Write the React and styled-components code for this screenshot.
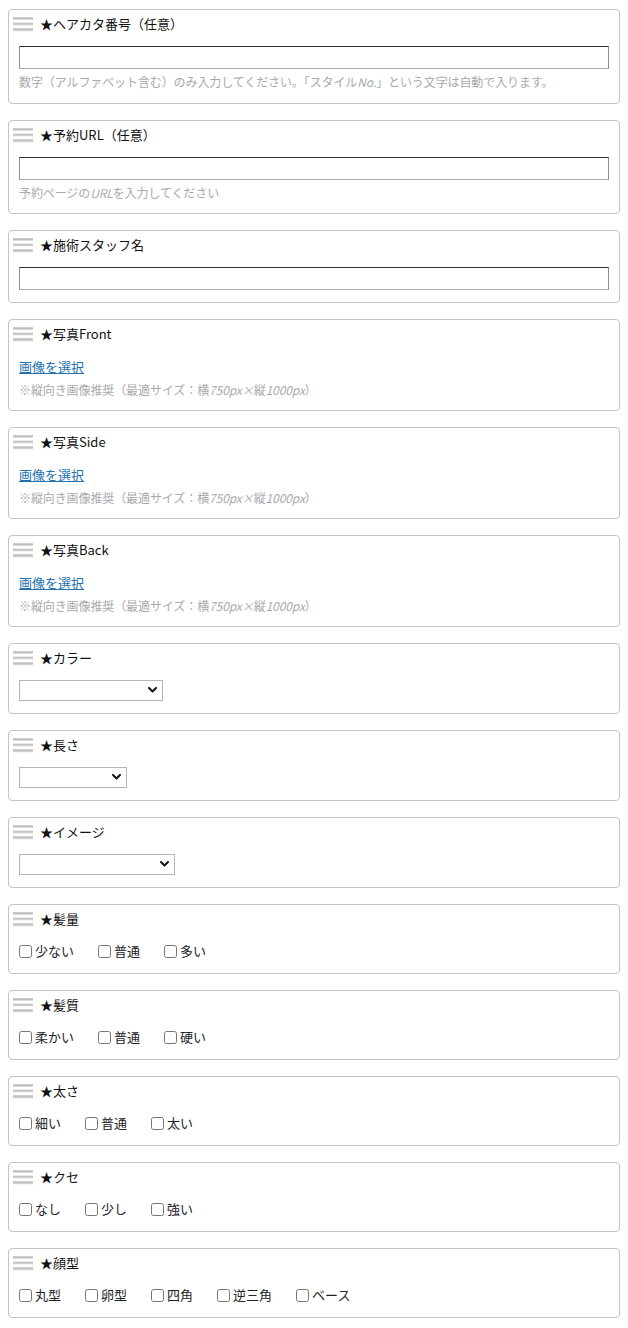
import React from "react";
import styled, { createGlobalStyle } from "styled-components";

const Global = createGlobalStyle`
  html, body { margin: 0; padding: 0; background: #fff; }
  body {
    font-family: "Noto Sans CJK JP", "Liberation Sans", sans-serif;
    color: #1d2327;
  }
`;

const Page = styled.main`
  padding: 9px 8px 0;
`;

const Card = styled.section`
  border: 1px solid #c3c4c7;
  border-radius: 4px;
  padding: 0 10px 12px;
  margin-bottom: 16px;
  background: #fff;
`;

const Header = styled.div`
  display: flex;
  align-items: center;
  gap: 7px;
  height: 28px;
  margin: 0 0 8px -6px;
`;

const Title = styled.h3`
  margin: 0;
  font-size: 13px;
  font-weight: 400;
  line-height: 18px;
  color: #111;
`;

const TextInput = styled.input`
  display: block;
  box-sizing: border-box;
  width: 100%;
  height: 23px;
  margin: 0;
  padding: 0 4px;
  border: 1px solid #8c8f94;
  border-top-color: #2c3338;
  border-bottom-color: #a7aaad;
  border-radius: 0;
  background: #fff;
  font: inherit;
  font-size: 13px;
  outline: none;
`;

const Desc = styled.p`
  margin: 4px 0 0;
  font-size: 12px;
  line-height: ${(p) => (p.$tall ? "17.5px" : "17px")};
  height: ${(p) => (p.$tall ? "17.5px" : "17px")};
  color: #a7aaad;
  white-space: nowrap;
  letter-spacing: -0.1px;
`;

const Em = styled.i`
  font-style: italic;
`;

const PickLink = styled.a`
  display: block;
  font-size: 13px;
  line-height: 21px;
  height: 21px;
  color: #2271b1;
  text-decoration: underline;
  width: max-content;
  cursor: pointer;
`;

const SelectWrap = styled.div`
  position: relative;
  width: ${(p) => p.$w}px;
  height: 21px;
`;

const Select = styled.select`
  appearance: none;
  -webkit-appearance: none;
  box-sizing: border-box;
  width: 100%;
  height: 21px;
  margin: 0;
  padding: 0 20px 0 4px;
  border: 1px solid #b4b6b9;
  border-radius: 0;
  background: #fff;
  font: inherit;
  font-size: 13px;
  color: #111;
  outline: none;
  display: block;
`;

const Chevron = styled.svg`
  position: absolute;
  right: 6px;
  top: 7px;
  width: 9px;
  height: 6px;
  pointer-events: none;
`;

const CheckRow = styled.div`
  display: flex;
  align-items: center;
  height: 20px;
  gap: 24px;
`;

const CheckLabel = styled.label`
  display: inline-flex;
  align-items: center;
  font-size: 13px;
  line-height: 20px;
  color: #1d2327;
  white-space: nowrap;
`;

const Box = styled.input`
  width: 13px;
  height: 13px;
  margin: 0 3px 0 0;
`;

function Handle() {
  return (
    <svg width="20" height="16" viewBox="0 0 20 16" aria-hidden="true">
      <defs>
        <linearGradient id="hg" x1="0" y1="0" x2="0" y2="1">
          <stop offset="0" stopColor="#d6d6d6" />
          <stop offset="0.5" stopColor="#bdbdbd" />
          <stop offset="1" stopColor="#ececec" />
        </linearGradient>
      </defs>
      <rect x="0" y="1" width="20" height="3" fill="url(#hg)" />
      <rect x="0" y="6.5" width="20" height="3" fill="url(#hg)" />
      <rect x="0" y="12" width="20" height="3.5" fill="url(#hg)" />
    </svg>
  );
}

function Field({ title, children }) {
  return (
    <Card>
      <Header>
        <Handle />
        <Title>{title}</Title>
      </Header>
      {children}
    </Card>
  );
}

function DropDown({ w }) {
  return (
    <SelectWrap $w={w}>
      <Select defaultValue="">
        <option value=""></option>
      </Select>
      <Chevron viewBox="0 0 9 6">
        <path d="M1 1 L4.5 4.5 L8 1" fill="none" stroke="#111" strokeWidth="2" strokeLinecap="round" strokeLinejoin="round" />
      </Chevron>
    </SelectWrap>
  );
}

function Checks({ items }) {
  return (
    <CheckRow>
      {items.map((t) => (
        <CheckLabel key={t}>
          <Box type="checkbox" />
          {t}
        </CheckLabel>
      ))}
    </CheckRow>
  );
}

function Photo({ name }) {
  return (
    <Field title={`★写真${name}`}>
      <PickLink>画像を選択</PickLink>
      <Desc>
        ※縦向き画像推奨（最適サイズ：横<Em>750px×</Em>縦<Em>1000px</Em>）
      </Desc>
    </Field>
  );
}

export default function App() {
  return (
    <>
      <Global />
      <Page>
        <Field title="★ヘアカタ番号（任意）">
          <TextInput type="text" />
          <Desc $tall>
            数字（アルファベット含む）のみ入力してください。「スタイル<Em>No.</Em>」という文字は自動で入ります。
          </Desc>
        </Field>
        <Field title="★予約URL（任意）">
          <TextInput type="text" />
          <Desc $tall>
            予約ページの<Em>URL</Em>を入力してください
          </Desc>
        </Field>
        <Field title="★施術スタッフ名">
          <TextInput type="text" />
        </Field>
        <Photo name="Front" />
        <Photo name="Side" />
        <Photo name="Back" />
        <Field title="★カラー">
          <DropDown w={144} />
        </Field>
        <Field title="★長さ">
          <DropDown w={108} />
        </Field>
        <Field title="★イメージ">
          <DropDown w={156} />
        </Field>
        <Field title="★髪量">
          <Checks items={["少ない", "普通", "多い"]} />
        </Field>
        <Field title="★髪質">
          <Checks items={["柔かい", "普通", "硬い"]} />
        </Field>
        <Field title="★太さ">
          <Checks items={["細い", "普通", "太い"]} />
        </Field>
        <Field title="★クセ">
          <Checks items={["なし", "少し", "強い"]} />
        </Field>
        <Field title="★顔型">
          <Checks items={["丸型", "卵型", "四角", "逆三角", "ベース"]} />
        </Field>
      </Page>
    </>
  );
}
